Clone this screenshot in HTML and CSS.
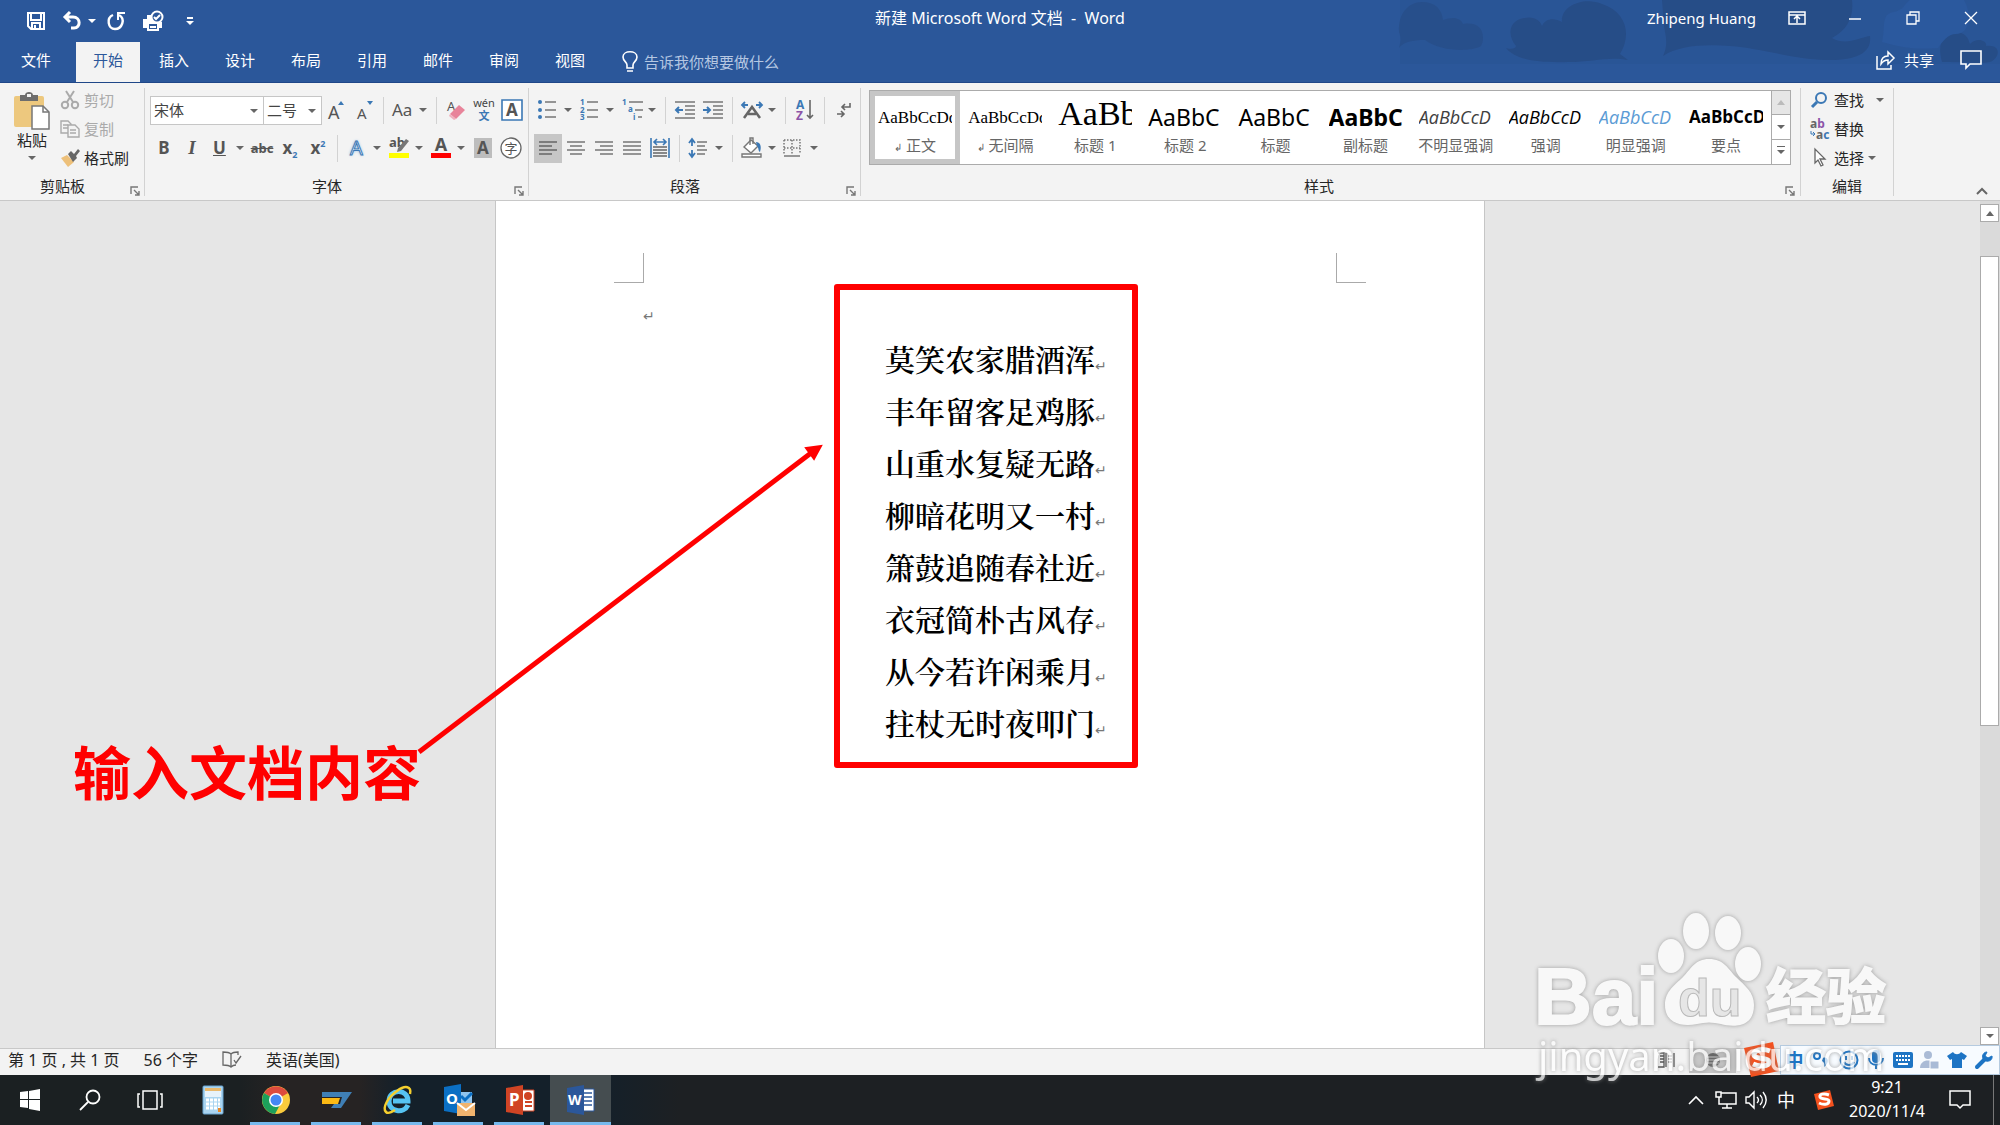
FILE: index.html
```html
<!DOCTYPE html>
<html lang="zh-CN">
<head>
    <meta charset="UTF-8">
    <meta name="viewport" content="width=device-width, initial-scale=1.0">
    <title>新建 Microsoft Word 文档 - Word</title>
    <link rel="stylesheet" href="styles.css">
</head>
<body>
    <header class="header">
        <!-- Cloud decoration behind the title bar -->
        <svg class="clouds" width="620" height="64" viewBox="0 0 620 64">
            <rect x="20" width="600" height="64" fill="#28518f" opacity=".5"/>
            <g fill="#25497f">
                <path opacity=".7" d="M19 48c2-8 2-10 0-16C18 14 28 2 42 2c14 0 20 8 21 18 10-4 18-2 20 4 14-2 20 4 20 14 0 4-1 6-2 8-10 6-40 6-56-6-12 0-22 2-26 8z"/>
                <path d="M126 48c6 2 10 0 10-2-10-12-6-26 8-28 10-2 16 2 18 8 4-8 12-8 20-4C180 6 204-4 222 4c24 8 30 30 18 50l8 6c-20-4-34 2-60 2-30 1-52-2-62-14z"/>
                <path d="M283 56c6-12 2-22 1-30L282 0h190c2 16-4 30-20 38 14 8 26 0 38-2 2 16-12 24-40 24-34 0-70-12-100-14-28-2-52 0-67 10z"/>
                <path d="M562 62c-4-14-2-28 12-30 12 0 14 6 16 12 8-8 18-2 16 2 16-2 14 12 4 16-12 2-34 0-48 0z"/>
            </g>
            <path fill="#2b5aa0" d="M530 0h54c8 14 6 34-8 34-8 0-14 8-18 14-30 2-40-2-56-6 4-14-2-28 12-30 10-2 10-8 16-12z"/>
        </svg>

        <div class="title-bar">
            <div class="quick-access">
                <button class="quick-button" title="保存"><svg width="20" height="20" fill="none" stroke="#fff" stroke-width="2"><path d="M2 2h16v16H5l-3-3zM5 2v7h10V2M6 18v-6h8v6M9 14v4"/></svg></button>
                <button class="quick-button quick-split" title="撤消"><svg width="20" height="20" fill="none" stroke="#fff" stroke-width="3"><path d="M8 1L3 6l5 5M3 6h8c8 0 8 11 1 11h-3"/></svg><i class="caret light"></i></button>
                <button class="quick-button quick-redo" title="重复"><svg width="20" height="20" fill="none" stroke="#fff" stroke-width="2.4"><path d="M7 4C0 7 2 18 9 18s11-10 4-14"/><path d="M19 2h-7v7" stroke-width="2"/></svg></button>
                <button class="quick-button quick-print" title="打印预览和打印"><svg width="22" height="22"><path d="M1 9h4V5h5v4l3 3h7v6h-3v3H5v-3H1z" fill="#fff"/><path d="M7 14h8v5H7z" fill="#2b579a"/><path d="M8 16h6v2H8z" fill="#fff"/><circle cx="15" cy="7" r="5.5" fill="#2b579a" stroke="#fff" stroke-width="2"/><path d="M12 7l2 2 4-4" fill="none" stroke="#fff" stroke-width="2"/></svg></button>
                <button class="quick-button" title="自定义快速访问工具栏"><svg width="8" height="10" fill="#fff"><path d="M1 1h6v2H1zM0 5h8L4 9z"/></svg></button>
            </div>
            <h1 class="window-title">新建 Microsoft Word 文档 &nbsp;- &nbsp;Word</h1>
            <div class="window-controls">
                <span class="user-name">Zhipeng Huang</span>
                <button class="window-button" title="功能区显示选项"><svg width="18" height="14" fill="none" stroke="#fff" stroke-width="1.5"><path d="M1 1h16v12H1zM1 4h16M9 12V6M6 8l3-3 3 3"/></svg></button>
                <button class="window-button" title="最小化"><svg width="14" height="14" stroke="#fff" stroke-width="1.5"><path d="M1 8h12"/></svg></button>
                <button class="window-button" title="向下还原"><svg width="14" height="14" fill="none" stroke="#fff" stroke-width="1.3"><path d="M1 4h9v9H1zM4 4V1h9v9h-3"/></svg></button>
                <button class="window-button" title="关闭"><svg width="14" height="14" stroke="#fff" stroke-width="1.3"><path d="M1 1l12 12M13 1L1 13"/></svg></button>
            </div>
        </div>

        <nav class="tabs">
            <button class="tab tab-file">文件</button>
            <button class="tab active">开始</button>
            <button class="tab">插入</button>
            <button class="tab">设计</button>
            <button class="tab">布局</button>
            <button class="tab">引用</button>
            <button class="tab">邮件</button>
            <button class="tab">审阅</button>
            <button class="tab">视图</button>
            <label class="tell-me">
                <svg width="16" height="22" fill="none" stroke="#fff" stroke-width="1.6"><path d="M5 17v-3c0-3-4-4-4-8 0-7 14-7 14 0 0 4-4 5-4 8v3zM5 20h6"/></svg>
                <input type="text" placeholder="告诉我你想要做什么">
            </label>
            <div class="share">
                <button class="share-button"><svg width="20" height="20" fill="none" stroke="#fff" stroke-width="1.5"><path d="M1 6v13h14v-4M5 14c0-6 3-8 7-8V2l6 6-6 6v-4c-3 0-5 1-7 4z"/></svg>共享</button>
                <button class="share-button" title="批注"><svg width="22" height="20" fill="none" stroke="#fff" stroke-width="1.6"><path d="M1 1h20v13H10l-4 4v-4H1z"/></svg></button>
            </div>
        </nav>
    </header>

    <div class="ribbon">
        <!-- Clipboard -->
        <section class="group">
            <div class="group-body clipboard">
                <button class="paste" title="粘贴">
                    <svg width="38" height="38"><rect x="1" y="4" width="30" height="31" rx="2" fill="#edc87e"/><path d="M7 3h5c0-4 8-4 8 0h5v6H7z" fill="#6d6d6d"/><rect x="14" y="2" width="4" height="3" fill="#f3f3f3"/><path d="M19 14h11l6 6v17H19z" fill="#fff" stroke="#777" stroke-width="1.5"/><path d="M30 14v6h6" fill="none" stroke="#777" stroke-width="1.5"/></svg>
                    粘贴
                    <i class="caret"></i>
                </button>
                <div class="stack">
                    <button class="label-button disabled"><svg width="20" height="20" fill="none" stroke="#aaa" stroke-width="2"><circle cx="5" cy="15" r="3.2"/><circle cx="15" cy="15" r="3.2"/><path d="M7 12l7-11M13 12L6 1"/></svg>剪切</button>
                    <button class="label-button disabled"><svg width="20" height="20" fill="#f3f3f3" stroke="#aaa" stroke-width="1.4"><path d="M1 2h7l3 3v9H1zM3 6h5M3 9h5"/><path d="M8 6h7l4 4v8H8zM10 11h6M10 14h6"/></svg>复制</button>
                    <button class="label-button"><svg width="20" height="20"><path d="M1 10l6-3 7 7-6 5z" fill="#edc07a"/><path d="M8 6l3-3 3 3 4-5 2 2-4 5 1 2-4 4z" fill="#666"/></svg>格式刷</button>
                </div>
            </div>
            <footer class="group-footer">剪贴板<button class="launcher" title="剪贴板设置"><svg width="10" height="10" fill="none" stroke="#777" stroke-width="1.4"><path d="M1 8V1h7M4 4l5 5M9 5v4H5"/></svg></button></footer>
        </section>

        <!-- Font -->
        <section class="group">
            <div class="group-body">
                <div class="row">
                    <div class="combo combo-font"><select aria-label="字体"><option>宋体</option></select><i class="caret"></i></div>
                    <div class="combo combo-size"><select aria-label="字号"><option>二号</option></select><i class="caret"></i></div>
                    <button class="tool" title="增大字号"><svg width="20" height="24"><text x="2" y="21" font-size="18" fill="#555">A</text><path d="M12 7l3-4 3 4z" fill="#3b78b5"/></svg></button>
                    <button class="tool" title="缩小字号"><svg width="20" height="24"><text x="3" y="21" font-size="15" fill="#555">A</text><path d="M13 3l3 4 3-4z" fill="#3b78b5"/></svg></button>
                    <span class="sep"></span>
                    <button class="tool split" title="更改大小写"><span class="glyph">Aa</span><i class="caret"></i></button>
                    <span class="sep"></span>
                    <button class="tool" title="清除所有格式"><svg width="22" height="22"><text x="2" y="12" font-size="13" fill="#555">A</text><path d="M5 15l9-9 6 5-9 9z" fill="#e8849a"/><path d="M5 15l6 5-2 1-5-4z" fill="#f0b0bd"/></svg></button>
                    <button class="tool" title="拼音指南"><svg width="24" height="24" text-anchor="middle"><text x="12" y="9" font-size="11" fill="#444">wén</text><text x="12" y="22" font-size="11" font-weight="bold" fill="#3b78b5">文</text></svg></button>
                    <button class="tool" title="字符边框"><svg width="22" height="22" text-anchor="middle"><path d="M1 1h20v20H1z" fill="#fff" stroke="#3b78b5" stroke-width="1.6"/><text x="11" y="17" font-size="17" font-weight="bold" fill="#555">A</text></svg></button>
                </div>
                <div class="row">
                    <button class="tool" title="加粗"><b>B</b></button>
                    <button class="tool" title="倾斜"><b class="italic">I</b></button>
                    <button class="tool split" title="下划线"><b class="underline">U</b><i class="caret"></i></button>
                    <button class="tool" title="删除线"><s>abc</s></button>
                    <button class="tool" title="下标"><b>x<sub>2</sub></b></button>
                    <button class="tool" title="上标"><b>x<sup>2</sup></b></button>
                    <span class="sep"></span>
                    <button class="tool split" title="文本效果"><span class="glow">A</span><i class="caret"></i></button>
                    <button class="tool split" title="突出显示"><svg width="22" height="24"><text x="1" y="11" font-size="13" font-weight="bold" fill="#555">ab</text><path d="M18 3l3 2-8 10-4 1 1-4z" fill="#777"/><path d="M1 17h20v5H1z" fill="#ff0"/></svg><i class="caret"></i></button>
                    <button class="tool split" title="字体颜色"><svg width="22" height="24" text-anchor="middle"><text x="11" y="15" font-size="18" font-weight="bold" fill="#555">A</text><path d="M1 17h20v5H1z" fill="#f00"/></svg><i class="caret"></i></button>
                    <button class="tool" title="字符底纹"><span class="shaded">A</span></button>
                    <button class="tool" title="带圈字符"><svg width="22" height="22" text-anchor="middle"><circle cx="11" cy="11" r="10" fill="#fff" stroke="#666" stroke-width="1.3"/><text x="11" y="16" font-size="13" fill="#555">字</text></svg></button>
                </div>
            </div>
            <footer class="group-footer">字体<button class="launcher" title="字体设置"><svg width="10" height="10" fill="none" stroke="#777" stroke-width="1.4"><path d="M1 8V1h7M4 4l5 5M9 5v4H5"/></svg></button></footer>
        </section>

        <!-- Paragraph -->
        <section class="group">
            <div class="group-body">
                <div class="row">
                    <button class="tool split" title="项目符号"><svg width="20" height="22"><path d="M8 3h11M8 11h11M8 18h11" stroke="#777" stroke-width="1.6"/><g fill="#3b78b5"><circle cx="3" cy="3" r="2"/><circle cx="3" cy="11" r="2"/><circle cx="3" cy="18" r="2"/></g></svg><i class="caret"></i></button>
                    <button class="tool split" title="编号"><svg width="20" height="22"><path d="M8 3h11M8 11h11M8 18h11" stroke="#777" stroke-width="1.6"/><g font-size="8" font-weight="bold" fill="#3b78b5"><text x="1" y="6">1</text><text x="1" y="14">2</text><text x="1" y="21">3</text></g></svg><i class="caret"></i></button>
                    <button class="tool split" title="多级列表"><svg width="22" height="22"><path d="M8 3h14M14 11h8M17 18h4" stroke="#777" stroke-width="1.6"/><g font-size="8" font-weight="bold" fill="#3b78b5"><text x="1" y="6">1</text><text x="7" y="13">a</text><text x="12" y="21">i</text></g></svg><i class="caret"></i></button>
                    <span class="sep"></span>
                    <button class="tool" title="减少缩进量"><svg width="22" height="20" fill="none" stroke="#777" stroke-width="1.6"><path d="M1 2h20M11 6h10M11 10h10M11 14h10M1 18h20"/><path d="M9 10H2M5 7l-3 3 3 3" stroke="#3b78b5" stroke-width="2"/></svg></button>
                    <button class="tool" title="增加缩进量"><svg width="22" height="20" fill="none" stroke="#777" stroke-width="1.6"><path d="M1 2h20M11 6h10M11 10h10M11 14h10M1 18h20"/><path d="M1 10h7M5 7l3 3-3 3" stroke="#3b78b5" stroke-width="2"/></svg></button>
                    <span class="sep"></span>
                    <button class="tool split" title="中文版式"><svg width="22" height="20"><path d="M1 5h6M4 2L1 5l3 3M21 5h-6M18 2l3 3-3 3" fill="none" stroke="#3b78b5" stroke-width="1.8"/><path d="M3 18L11 7l8 11M7 14h8" fill="none" stroke="#666" stroke-width="2.5"/></svg><i class="caret"></i></button>
                    <span class="sep"></span>
                    <button class="tool" title="排序"><svg width="20" height="22"><g font-size="12" font-weight="bold"><text x="1" y="10" fill="#3b78b5">A</text><text x="1" y="21" fill="#8c54a8">Z</text></g><path d="M15 1v18M12 16l3 3 3-3" fill="none" stroke="#666" stroke-width="1.6"/></svg></button>
                    <span class="sep"></span>
                    <button class="tool" title="显示/隐藏编辑标记"><svg width="16" height="18" fill="none" stroke="#666" stroke-width="1.6"><path d="M14 2v4H6M9 3L6 6l3 3M1 13h7M5 10l3 3-3 3"/></svg></button>
                </div>
                <div class="row">
                    <button class="tool selected" title="左对齐"><svg width="20" height="16" stroke="#666" stroke-width="1.6"><path d="M1 2h18M1 6h13M1 10h18M1 14h13"/></svg></button>
                    <button class="tool" title="居中"><svg width="20" height="16" stroke="#777" stroke-width="1.6"><path d="M1 2h18M4 6h12M1 10h18M4 14h12"/></svg></button>
                    <button class="tool" title="右对齐"><svg width="20" height="16" stroke="#777" stroke-width="1.6"><path d="M1 2h18M6 6h13M1 10h18M6 14h13"/></svg></button>
                    <button class="tool" title="两端对齐"><svg width="20" height="16" stroke="#777" stroke-width="1.6"><path d="M1 2h18M1 6h18M1 10h18M1 14h18"/></svg></button>
                    <button class="tool" title="分散对齐"><svg width="20" height="20" fill="none"><path d="M1 0v20M19 0v20M5 4h10M7 1L4 4l3 3M13 1l3 3-3 3" stroke="#3b78b5" stroke-width="1.6"/><path d="M3 9h14M3 12h14M3 15h14M3 18h14" stroke="#666" stroke-width="1.5"/></svg></button>
                    <span class="sep"></span>
                    <button class="tool split" title="行和段落间距"><svg width="20" height="20" fill="none"><path d="M4 2v6M1 5l3-4 3 4M4 12v6M1 15l3 4 3-4" stroke="#3b78b5" stroke-width="1.8"/><path d="M9 4h10M9 8h8M9 12h10M9 16h8" stroke="#777" stroke-width="1.6"/></svg><i class="caret"></i></button>
                    <span class="sep"></span>
                    <button class="tool split" title="底纹"><svg width="22" height="22" fill="#fff" stroke="#777" stroke-width="1.4"><path d="M3 10l7-7 7 6-7 7z"/><path d="M9 8V1h3v6" fill="none"/><path d="M15 5c4 0 6 4 4 10-2-1-1-4-3-6z" fill="#3b78b5" stroke="none"/><path d="M1 17h19v3H1z"/></svg><i class="caret"></i></button>
                    <button class="tool split" title="边框"><svg width="18" height="18" fill="none" stroke="#777" stroke-width="1.5"><path d="M1 1h16v14M1 1v14M9 1v14M1 9h16" stroke-dasharray="1.5 1.5"/><path d="M1 17h16"/></svg><i class="caret"></i></button>
                </div>
            </div>
            <footer class="group-footer">段落<button class="launcher" title="段落设置"><svg width="10" height="10" fill="none" stroke="#777" stroke-width="1.4"><path d="M1 8V1h7M4 4l5 5M9 5v4H5"/></svg></button></footer>
        </section>

        <!-- Styles -->
        <section class="group group-styles">
            <div class="group-body gallery">
                <div class="gallery-items">
                    <button class="style-item current"><span class="sample song">AaBbCcDd</span><span class="style-name"><small>↲</small> 正文</span></button>
                    <button class="style-item"><span class="sample song">AaBbCcDd</span><span class="style-name"><small>↲</small> 无间隔</span></button>
                    <button class="style-item"><span class="sample heading-one">AaBb</span><span class="style-name">标题 1</span></button>
                    <button class="style-item"><span class="sample heading">AaBbC</span><span class="style-name">标题 2</span></button>
                    <button class="style-item"><span class="sample heading">AaBbC</span><span class="style-name">标题</span></button>
                    <button class="style-item"><span class="sample heading bold">AaBbC</span><span class="style-name">副标题</span></button>
                    <button class="style-item"><span class="sample emphasis subtle">AaBbCcD</span><span class="style-name">不明显强调</span></button>
                    <button class="style-item"><span class="sample emphasis">AaBbCcD</span><span class="style-name">强调</span></button>
                    <button class="style-item"><span class="sample emphasis intense">AaBbCcD</span><span class="style-name">明显强调</span></button>
                    <button class="style-item"><span class="sample strong">AaBbCcD</span><span class="style-name">要点</span></button>
                </div>
                <div class="gallery-scroll">
                    <button class="off" title="上一行"><i class="caret up"></i></button>
                    <button title="下一行"><i class="caret"></i></button>
                    <button title="其他"><i class="caret more"></i></button>
                </div>
            </div>
            <footer class="group-footer">样式<button class="launcher" title="样式窗格"><svg width="10" height="10" fill="none" stroke="#777" stroke-width="1.4"><path d="M1 8V1h7M4 4l5 5M9 5v4H5"/></svg></button></footer>
        </section>

        <!-- Editing -->
        <section class="group group-editing">
            <div class="group-body editing">
                <button class="label-button"><svg width="18" height="18" fill="none" stroke="#3b78b5"><circle cx="11" cy="7" r="5" stroke-width="2"/><path d="M7 11l-5 5" stroke-width="3"/></svg>查找<i class="caret caret-far"></i></button>
                <button class="label-button"><svg width="20" height="22" font-size="12" font-weight="bold"><text x="0" y="10" fill="#666">a<tspan fill="#8c54a8">b</tspan></text><text x="6" y="21" fill="#666">a<tspan fill="#3b78b5">c</tspan></text><path d="M1 13v3h4M3 14l2 2-2 2" fill="none" stroke="#3b78b5"/></svg>替换</button>
                <button class="label-button"><svg width="18" height="20" fill="#fff" stroke="#666" stroke-width="1.3"><path d="M5 1v14l3-3 3 6 2-1-3-6h5z"/></svg>选择<i class="caret"></i></button>
            </div>
            <footer class="group-footer">编辑</footer>
        </section>

        <div class="ribbon-end">
            <button class="collapse" title="折叠功能区"><svg width="12" height="10" fill="none" stroke="#666" stroke-width="2"><path d="M1 8l5-5 5 5"/></svg></button>
        </div>
    </div>

    <main class="workspace">
        <div class="canvas">
            <article class="page">
                <div class="corners"><span class="corner corner-left"></span><span class="corner corner-right"></span></div>
                <p class="empty-line"><span class="mark">↵</span></p>
                <div class="poem">
                    <p>莫笑农家腊酒浑<span class="mark">↵</span></p>
                    <p>丰年留客足鸡豚<span class="mark">↵</span></p>
                    <p>山重水复疑无路<span class="mark">↵</span></p>
                    <p>柳暗花明又一村<span class="mark">↵</span></p>
                    <p>箫鼓追随春社近<span class="mark">↵</span></p>
                    <p>衣冠简朴古风存<span class="mark">↵</span></p>
                    <p>从今若许闲乘月<span class="mark">↵</span></p>
                    <p>拄杖无时夜叩门<span class="mark">↵</span></p>
                    <span class="frame"></span>
                </div>
            </article>
        </div>
        <div class="scrollbar">
            <button title="向上滚动"><i class="caret up"></i></button>
            <div class="track"><div class="thumb"></div></div>
            <button title="向下滚动"><i class="caret"></i></button>
        </div>

        <!-- Annotation over the document -->
        <svg class="arrow" width="410" height="314"><path d="M2 310L394 11" stroke="#f00" stroke-width="5"/><path d="M404 4l-7 13-8-11z" fill="#f00" stroke="#f00" stroke-width="2"/></svg>
        <p class="callout">输入文档内容</p>
    </main>

    <div class="status-bar">
        <span>第 1 页 , 共 1 页</span>
        <span>56 个字</span>
        <svg width="20" height="18" fill="none" stroke="#666" stroke-width="1.3"><path d="M9 15V3C7 1 4 1 1 1v13c3 0 6 0 8 2 2-2 3-2 5-2M9 3c2-2 4-2 7-2v3M12 9l2 3 5-7"/></svg>
        <span>英语(美国)</span>
        <div class="views">
            <button title="阅读视图"><svg width="18" height="16" fill="none" stroke="#555" stroke-width="1.3"><path d="M9 1v14M1 1h6v14H1M3 4h4M3 7h4M3 10h4M11 4h4M11 7h4M11 10h4M17 1v14"/></svg></button>
            <button class="selected" title="页面视图"><svg width="16" height="16"><circle cx="8" cy="8" r="7" fill="#666"/><path d="M2 5h12M2 8h12M2 11h12" stroke="#ccc"/></svg></button>
        </div>
        <!-- Sogou input method bar -->
        <div class="ime">
            <svg class="ime-logo" width="36" height="36"><path d="M1 6l29-6 6 29-28 6z" fill="#f4511e"/><path d="M27 9c-8-3-17-1-16 4 1 5 15 2 15 7 0 5-10 5-16 2" fill="none" stroke="#fff" stroke-width="5"/></svg>
            <button title="中/英文"><b>中</b></button>
            <button title="中/英文标点"><svg width="20" height="20"><circle cx="5" cy="6" r="3" fill="none" stroke="#1d74c4" stroke-width="2"/><path d="M11 8c4-2 8 4 1 9 1-3 0-5-2-6z" fill="#1d74c4"/></svg></button>
            <button title="表情"><svg width="20" height="20" fill="none" stroke="#1d74c4" stroke-width="2"><circle cx="10" cy="10" r="8.5"/><path d="M7 6v4M13 6v4M5 12c2 4 8 4 10 0"/></svg></button>
            <button title="语音"><svg width="20" height="20" fill="none" stroke="#1d74c4" stroke-width="2"><rect x="7" y="1" width="6" height="11" rx="3" fill="#1d74c4"/><path d="M3 8c0 9 14 9 14 0M10 15v4"/></svg></button>
            <button title="输入方式"><svg width="20" height="16"><rect width="20" height="16" rx="2" fill="#1d74c4"/><path d="M3 4h14M3 8h14" stroke="#fff" stroke-width="2" stroke-dasharray="2 1"/><path d="M5 12h10" stroke="#fff" stroke-width="2"/></svg></button>
            <button title="登录"><svg width="20" height="20" fill="#aabbd6"><circle cx="8" cy="5" r="4"/><path d="M0 18c0-10 15-10 16 0z"/><rect x="10" y="11" width="9" height="8" stroke="#fff"/></svg></button>
            <button title="皮肤"><svg width="20" height="20" fill="#1d74c4"><path d="M6 2c2 3 6 3 8 0l6 4-3 4-2-1v9H5V9l-2 1-3-4z"/></svg></button>
            <button title="工具箱"><svg width="20" height="20" fill="none" stroke="#1d74c4"><path d="M3 17l8-8" stroke-width="4" stroke-linecap="round"/><path d="M13 2c-4 0-6 5-3 8 4 3 9 0 8-4l-4 2-3-2z" stroke-width="1" fill="#1d74c4"/></svg></button>
        </div>
    </div>

    <div class="taskbar">
        <button class="task system" title="开始"><svg width="22" height="24" fill="#fff"><path d="M1 4l8-1v8H1zM10 3l11-2v10H10zM1 12h8v8l-8-1zM10 12h11v11l-11-2z"/></svg></button>
        <button class="task system" title="搜索"><svg width="22" height="22" fill="none" stroke="#fff" stroke-width="1.8"><circle cx="14" cy="8" r="6.5"/><path d="M9 13l-8 8"/></svg></button>
        <button class="task system" title="任务视图"><svg width="26" height="20" fill="none" stroke="#fff" stroke-width="1.5"><path d="M6 1h14v18H6zM3 4H1v13h2M23 4h2v13h-2"/></svg></button>
        <button class="task first-app" title="计算器"><svg width="22" height="30"><rect x="1" y="1" width="20" height="28" rx="1" fill="#a9d4f0" stroke="#6ba5d0"/><path d="M3 3h16v9H3z" fill="#e7f2fa"/><path d="M3 3h16v3H3z" fill="#e9b96d"/><path d="M4 15h14M4 19h14M4 23h14" stroke="#fff" stroke-width="3" stroke-dasharray="3 1"/><path d="M16 23h3v4h-3z" fill="#e88a2a"/></svg></button>
        <button class="task running" title="Chrome"><svg width="30" height="30"><circle cx="15" cy="15" r="14" fill="#fbcb3c"/><path d="M15 15L3 8a14 14 0 0 1 24 0z" fill="#dd4b3e"/><path d="M15 15L3 8a14 14 0 0 0 11 21l6-11z" fill="#1da05b"/><circle cx="15" cy="15" r="7" fill="#fff"/><circle cx="15" cy="15" r="5.5" fill="#4587f3"/></svg></button>
        <button class="task running" title="SAP Logon"><svg width="32" height="18"><path d="M1 1h30L20 17H10l3-4h6l2-7H1z" fill="#3f7fb5"/><path d="M1 7h18l-2 6H1z" fill="#fbb914"/></svg></button>
        <button class="task running" title="Internet Explorer"><svg width="30" height="30" fill="none"><path d="M25 20c-4 9-19 7-19-4C6 4 25 3 25 16H10" stroke="#56c3f2" stroke-width="5"/><path d="M27 9c2-8-5-9-13-3C5 12-1 23 3 27c2 2 6 0 9-2" stroke="#f5cf2e" stroke-width="2.5"/></svg></button>
        <button class="task running" title="Outlook"><svg width="34" height="34"><path d="M17 9h13v14H17z" fill="#fff"/><path d="M17 9h13v12H17z" fill="#8fc4ee"/><path d="M19 13l4 4 7-7" fill="none" stroke="#0b6fc4" stroke-width="3"/><path d="M2 4l17-3v30L2 28z" fill="#0b6fc4"/><text x="4" y="21" font-size="15" font-weight="bold" fill="#fff">O</text><path d="M15 20h18v13H15z" fill="#f0b36e"/><path d="M15 20l9 7 9-7" fill="none" stroke="#fff" stroke-width="2"/></svg></button>
        <button class="task running" title="PowerPoint"><svg width="30" height="32"><path d="M16 6h13v21H16z" fill="#fff" stroke="#d04424"/><path d="M20 18h7M20 22h7" stroke="#d04424" stroke-width="2"/><circle cx="23" cy="12" r="4" fill="#d04424"/><path d="M1 4l17-3v30L1 28z" fill="#d04424"/><text x="4" y="22" font-size="17" font-weight="bold" fill="#fff">P</text></svg></button>
        <button class="task running current" title="Word"><svg width="30" height="32"><path d="M16 5h12v22H16z" fill="#fff" stroke="#2b579a"/><path d="M18 9h8M18 13h8M18 17h8M18 21h8" stroke="#2b579a" stroke-width="1.5"/><path d="M1 4l17-3v30L1 28z" fill="#2b579a"/><text x="2" y="21" font-size="14" font-weight="bold" fill="#fff">W</text></svg></button>

        <div class="tray">
            <button title="显示隐藏的图标"><svg width="16" height="10" fill="none" stroke="#fff" stroke-width="1.6"><path d="M1 9l7-7 7 7"/></svg></button>
            <button title="网络"><svg width="22" height="20" fill="none" stroke="#fff" stroke-width="1.5"><path d="M6 3h15v11H4V9M12 14v4M7 18h10M1 2h5v5H1zM4 7v3"/></svg></button>
            <button title="音量"><svg width="22" height="18" fill="none" stroke="#fff" stroke-width="1.4"><path d="M1 6h3l5-5v16l-5-5H1zM12 6c2 2 2 4 0 6M15 4c3 3 3 7 0 10M18 1c4 5 4 11 0 16"/></svg></button>
            <button title="输入法" class="tray-ime">中</button>
            <button title="搜狗输入法" class="tray-sogou"><svg width="20" height="20"><path d="M0 4l16-4 4 16-16 4z" fill="#f4511e"/><path d="M15 5c-5-2-10-1-9 2 1 3 9 1 9 4 0 4-6 4-10 2" fill="none" stroke="#fff" stroke-width="3"/></svg></button>
            <time class="clock"><span>9:21</span><span>2020/11/4</span></time>
            <button title="通知" class="tray-notice"><svg width="22" height="20" fill="none" stroke="#fff" stroke-width="1.5"><path d="M1 1h20v14h-7l-3 3-3-3H1z"/></svg></button>
            <span class="show-desktop"></span>
        </div>
    </div>

    <svg class="watermark" width="370" height="180">
        <g class="watermark-shape">
            <text class="brand" x="0" y="115" font-size="80">Bai</text>
            <ellipse cx="137" cy="47" rx="13" ry="17"/>
            <ellipse cx="162" cy="22" rx="13" ry="18"/>
            <ellipse cx="194" cy="24" rx="13" ry="17"/>
            <ellipse cx="214" cy="55" rx="13" ry="17"/>
            <path d="M175 50c15 0 19 10 27 18 9 9 18 15 18 28 0 24-22 22-33 19-8-2-16-2-24 0-14 3-32 0-32-19 0-14 10-20 18-28s12-18 26-18z"/>
            <text class="brand-cn" x="232" y="110" font-size="60">经验</text>
            <text class="url" x="4" y="162" font-size="40">jingyan.baidu.com</text>
        </g>
        <text class="brand-du" x="144" y="107" font-size="52">du</text>
    </svg>
</body>
</html>
```

FILE: styles.css
```css
* {
    box-sizing: border-box;
}

body {
    margin: 0;
    height: 100vh;
    display: flex;
    flex-direction: column;
    overflow: hidden;
    font-family: "Noto Sans", "Noto Sans CJK SC", sans-serif;
    font-size: 15px;
    line-height: 20px;
    color: #262626;
}

button {
    margin: 0;
    padding: 0;
    border: none;
    background: none;
    font: inherit;
    color: inherit;
    display: flex;
    align-items: center;
    justify-content: center;
}

svg {
    display: block;
    flex: none;
    overflow: visible;
}

p {
    margin: 0;
}

.caret {
    width: 0;
    height: 0;
    flex: none;
    border: 4px solid transparent;
    border-top: 4px solid #666;
    border-bottom: none;
}

.caret.light {
    border-top-color: #fff;
}

.caret.up {
    border-top: none;
    border-bottom: 5px solid #666;
}

/* Title bar and tabs */
.header {
    position: relative;
    background: #2b579a;
    color: #fff;
    border-bottom: 1px solid #1f4788;
}

.clouds {
    position: absolute;
    top: 0;
    right: 0;
    opacity: 0.7;
}

.title-bar {
    position: relative;
    height: 42px;
    padding-bottom: 6px;
    display: grid;
    grid-template-columns: 1fr auto 1fr;
    align-items: center;
}

.quick-access {
    display: flex;
    align-items: center;
    padding-left: 18px;
    padding-top: 5px;
}

.quick-button {
    width: 36px;
    height: 30px;
    margin-right: 6px;
}

.quick-button.quick-split {
    width: 38px;
    gap: 6px;
    margin-right: 0;
}

.quick-button.quick-redo {
    margin-right: 0;
}

.quick-button.quick-print {
    width: 38px;
    margin-right: 0;
}

.window-title {
    margin: 0;
    font-size: 16px;
    font-weight: normal;
}

.window-controls {
    display: flex;
    align-items: center;
    justify-content: flex-end;
    height: 36px;
}

.user-name {
    margin-right: 12px;
}

.window-button {
    width: 58px;
    height: 36px;
}

.tabs {
    position: relative;
    display: flex;
    height: 40px;
}

.tab {
    width: 64px;
    margin-right: 2px;
    padding-bottom: 4px;
    font-size: 15px;
}

.tab-file {
    width: 72px;
    margin-right: 4px;
}

.tab.active {
    background: #f3f3f3;
    color: #2b579a;
}

.tell-me {
    display: flex;
    align-items: center;
    gap: 6px;
    margin-left: 18px;
}

.tell-me input {
    width: 180px;
    padding: 0;
    border: none;
    background: none;
    font: inherit;
    color: #fff;
}

.tell-me input::placeholder {
    color: #b5c7e2;
    opacity: 1;
}

.share {
    display: flex;
    margin-left: auto;
    padding-right: 18px;
    gap: 26px;
}

.share-button {
    gap: 8px;
    padding-bottom: 5px;
}

/* Ribbon */
.ribbon {
    display: flex;
    padding: 5px 0 4px;
    background: #f3f3f3;
    border-bottom: 1px solid #c8c8c8;
}

.group {
    display: flex;
    flex-direction: column;
    padding: 0 2px 0 5px;
    border-right: 1px solid #d2d2d2;
}

.group-styles {
    flex: 1;
    padding: 0 9px 0 8px;
}

.group-editing {
    padding: 0 5px;
}

.group-body {
    height: 89px;
    padding-top: 7px;
    display: flex;
    flex-direction: column;
    gap: 8px;
}

.group-footer {
    position: relative;
    height: 19px;
    padding-right: 22px;
    line-height: 19px;
    text-align: center;
}

.group-editing .group-footer {
    padding-right: 0;
}

.launcher {
    position: absolute;
    right: 2px;
    bottom: 0;
}

.group-styles .launcher {
    right: -4px;
}

.clipboard {
    flex-direction: row;
    padding: 4px 12px 0 8px;
    gap: 9px;
}

.paste {
    flex-direction: column;
    justify-content: flex-start;
}

.paste .caret {
    margin-top: 6px;
}

.stack {
    display: flex;
    flex-direction: column;
    width: 70px;
    margin-top: -7px;
}

.label-button {
    height: 29px;
    gap: 4px;
    justify-content: flex-start;
    white-space: nowrap;
}

.label-button.disabled {
    color: #aaa;
}

.row {
    display: flex;
    align-items: center;
    height: 30px;
}

.combo {
    position: relative;
    height: 29px;
    background: #fff;
    border: 1px solid #c6c6c6;
}

.combo + .combo {
    border-left: none;
}

.combo-font {
    width: 114px;
}

.combo-size {
    width: 58px;
}

.combo select {
    width: 100%;
    height: 100%;
    padding: 0 3px;
    border: none;
    background: none;
    appearance: none;
    font: inherit;
    color: #444;
}

.combo .caret {
    position: absolute;
    right: 5px;
    top: 12px;
    pointer-events: none;
}

.tool {
    position: relative;
    width: 28px;
    height: 29px;
    color: #555;
    font-size: 17px;
}

.tool.split {
    width: 42px;
    justify-content: space-between;
    padding-left: 3px;
    padding-right: 4px;
}

.tool.selected {
    background: #c6c6c6;
}

.tool .underline {
    padding-left: 4px;
    text-decoration: underline;
}

.tool .italic {
    font-family: "Liberation Serif", serif;
    font-style: italic;
    font-size: 19px;
}

.tool s {
    font-size: 13px;
    font-weight: bold;
}

.tool sub,
.tool sup {
    font-size: 9px;
    line-height: 0;
    color: #3b78b5;
}

.tool .glow {
    padding-left: 4px;
    font-size: 20px;
    color: #fff;
    -webkit-text-stroke: 1px #3b78b5;
    text-shadow: 0 0 3px #6aa7dd;
}

.tool .shaded {
    width: 18px;
    background: #bdbdbd;
    font-weight: bold;
    line-height: 20px;
}

.sep {
    width: 1px;
    height: 27px;
    margin: 0 5px;
    background: #d2d2d2;
}

/* Style gallery */
.gallery {
    flex-direction: row;
    gap: 0;
    padding: 2px 0 12px;
}

.gallery-items {
    flex: 1;
    display: grid;
    grid-template-columns: repeat(10, 1fr);
    background: #fff;
    border: 1px solid #ababab;
}

.style-item {
    min-width: 0;
    flex-direction: column;
    justify-content: flex-end;
    padding: 0 3px 5px;
    border: 5px solid transparent;
    border-bottom-width: 4px;
}

.style-item.current {
    border: 5px solid #c6c6c6;
    padding-bottom: 4px;
}

.sample {
    width: 74px;
    height: 36px;
    overflow: hidden;
    line-height: 36px;
    text-align: left;
    white-space: nowrap;
    color: #000;
}

.sample.song {
    font-family: "Liberation Serif", serif;
    font-size: 17px;
    line-height: 38px;
}

.sample.heading-one {
    font-family: "Liberation Serif", serif;
    font-size: 34px;
    line-height: 30px;
}

.sample.heading {
    font-size: 23px;
}

.sample.bold {
    font-weight: bold;
}

.sample.emphasis {
    font-family: "Open Sans", sans-serif;
    font-size: 18px;
    font-style: italic;
}

.sample.subtle {
    color: #404040;
}

.sample.intense {
    color: #5b9bd5;
}

.sample.strong {
    font-family: "Open Sans", sans-serif;
    font-size: 17px;
    font-weight: bold;
}

.style-name {
    color: #666;
    white-space: nowrap;
}

.style-name small {
    font-size: 10px;
    line-height: 1;
}

.gallery-scroll {
    display: grid;
    grid-template-rows: repeat(3, 1fr);
    width: 19px;
}

.gallery-scroll button {
    background: #fff;
    border: 1px solid #ababab;
    border-left: none;
}

.gallery-scroll .off {
    background: #e6e6e6;
}

.gallery-scroll .off .caret {
    border-bottom-color: #bbb;
}

.gallery-scroll button + button {
    border-top: none;
}

.caret.more {
    position: relative;
}

.caret.more::before {
    content: "";
    position: absolute;
    left: -4px;
    top: -8px;
    width: 8px;
    height: 1px;
    background: #666;
}

.group-body.editing {
    width: 82px;
    padding: 0 0 0 4px;
    gap: 0;
    margin-top: -3px;
    margin-bottom: 3px;
}

.editing svg {
    width: 20px;
}

.caret-far {
    margin-left: 8px;
}

.ribbon-end {
    width: 106px;
    display: flex;
    align-items: flex-end;
    justify-content: flex-end;
    padding: 0 12px 0 0;
}

/* Document */
.workspace {
    position: relative;
    flex: 1;
    min-height: 0;
    display: flex;
    background: #e6e6e6;
}

.canvas {
    flex: 1;
    display: flex;
    justify-content: center;
}

.page {
    width: 50%;
    padding: 52px 118px 0;
    background: #fff;
    border: 1px solid #c6c6c6;
    border-width: 0 1px;
}

.corners {
    display: flex;
    justify-content: space-between;
}

.corner {
    width: 30px;
    height: 30px;
    border-bottom: 1px solid #aaa;
}

.corner-left {
    border-right: 1px solid #aaa;
}

.corner-right {
    border-left: 1px solid #aaa;
}

.empty-line {
    height: 49px;
    padding: 22px 29px 0;
}

.mark {
    color: #777;
    font-family: "DejaVu Sans", sans-serif;
    font-size: 14px;
    font-weight: normal;
    line-height: 1;
}

.poem {
    position: relative;
    width: 210px;
    margin: 0 auto;
    white-space: nowrap;
    font-family: "Noto Serif CJK SC", "Noto Sans CJK SC", serif;
    font-size: 30px;
    font-weight: 600;
    line-height: 52px;
    color: #000;
}

.poem p {
    height: 52px;
}

.frame {
    position: absolute;
    inset: -48px -43px -20px -51px;
    border: 6px solid #f00;
    border-radius: 3px;
}

.scrollbar {
    width: 20px;
    padding: 3px 1px 3px 0;
    display: flex;
    flex-direction: column;
    background: #dadada;
}

.scrollbar button {
    height: 18px;
    background: #fff;
    border: 1px solid #ababab;
}

.track {
    flex: 1;
    padding-top: 34px;
}

.thumb {
    height: 61%;
    background: #fff;
    border: 1px solid #ababab;
}

.arrow {
    position: absolute;
    left: 417px;
    top: 241px;
}

.callout {
    position: absolute;
    left: 73px;
    top: 537px;
    font-size: 58px;
    line-height: 70px;
    font-weight: bold;
    color: #f00;
}

/* Status bar */
.status-bar {
    display: flex;
    align-items: center;
    height: 27px;
    padding-left: 8px;
    padding-bottom: 4px;
    gap: 24px;
    background: #f3f3f3;
    border-top: 1px solid #c8c8c8;
    font-size: 16px;
}

.views {
    display: flex;
    margin-left: auto;
}

.views button {
    width: 47px;
    height: 26px;
}

.views .selected {
    background: #c6c6c6;
}

.ime {
    position: relative;
    display: flex;
    height: 30px;
    margin-left: 20px;
    padding-right: 2px;
    background: #f7fbff;
    border: 1px solid #b5cbe0;
    color: #1d74c4;
}

.ime button {
    width: 27px;
    font-size: 18px;
}

.ime-logo {
    position: absolute;
    left: -38px;
    top: -4px;
}

/* Taskbar */
.taskbar {
    display: flex;
    height: 50px;
    background: linear-gradient(90deg, #1b2022 0, #1b2022 12%, #262323 14%, #262323 18%, #14202a 20%, #14202a 30%, #1d2023 34%);
    color: #fff;
}

.task {
    position: relative;
    width: 61px;
}

.task.system {
    width: 60px;
}

.task.first-app {
    width: 65px;
}

.running::after {
    content: "";
    position: absolute;
    left: 5px;
    right: 6px;
    bottom: 0;
    height: 3px;
    background: #76b9ed;
}

.task.current {
    background: #454d50;
}

.current::after {
    left: 0;
    right: 0;
}

.tray {
    display: flex;
    margin-left: auto;
}

.tray button {
    width: 30px;
}

.tray .tray-ime {
    font-size: 18px;
}

.tray .tray-sogou {
    width: 46px;
}

.clock {
    width: 80px;
    display: flex;
    flex-direction: column;
    justify-content: center;
    text-align: center;
    line-height: 24px;
    padding-bottom: 2px;
    font-size: 16px;
}

.tray .tray-notice {
    width: 66px;
}

.show-desktop {
    width: 7px;
    border-left: 1px solid #777;
}

.watermark {
    position: absolute;
    right: 96px;
    bottom: 36px;
    opacity: 0.75;
    pointer-events: none;
    filter: drop-shadow(0 0 2px #888);
}

.watermark-shape {
    fill: #fff;
}

.brand,
.brand-cn {
    font-family: "Liberation Sans", "Noto Sans CJK SC", sans-serif;
    font-weight: bold;
    stroke: #fff;
    stroke-width: 2px;
}

.brand-du {
    font-family: "Liberation Sans", sans-serif;
    font-weight: bold;
    fill: #e6e6e6;
    stroke: #aaa;
}
```
